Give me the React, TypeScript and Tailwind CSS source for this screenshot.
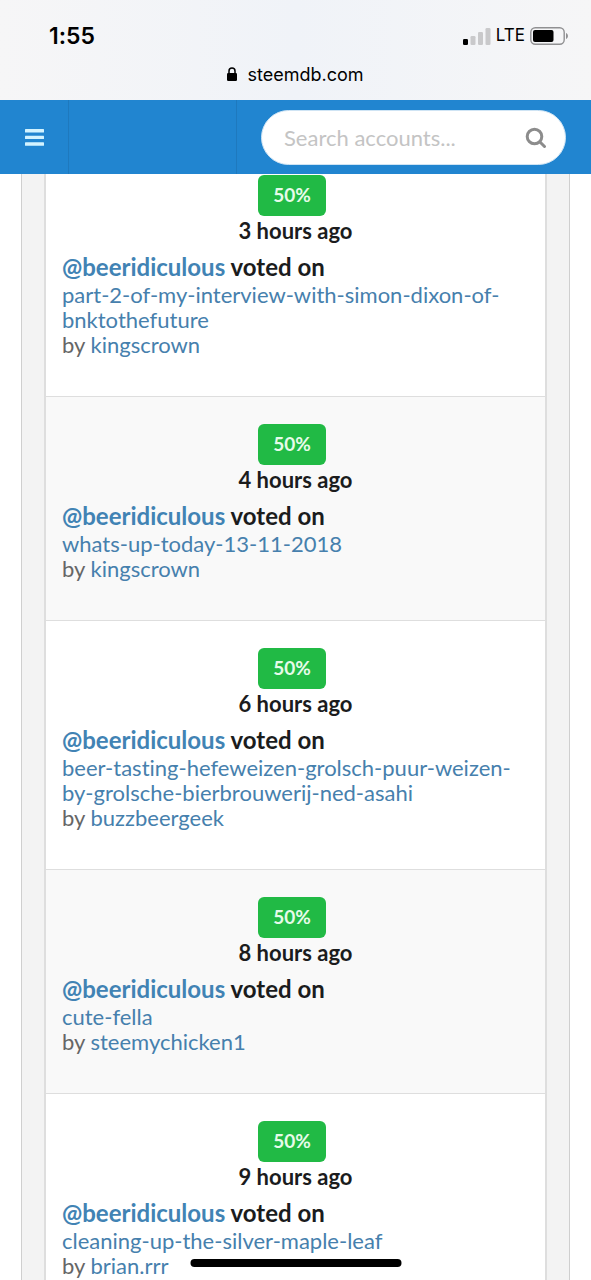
import React from 'react';

interface Vote {
  weight: string;
  time: string;
  post: string;
  author: string;
}

const voter = 'beeridiculous';

const votes: Vote[] = [
  { weight: '50%', time: '3 hours ago', post: 'part-2-of-my-interview-with-simon-dixon-of-bnktothefuture', author: 'kingscrown' },
  { weight: '50%', time: '4 hours ago', post: 'whats-up-today-13-11-2018', author: 'kingscrown' },
  { weight: '50%', time: '6 hours ago', post: 'beer-tasting-hefeweizen-grolsch-puur-weizen-by-grolsche-bierbrouwerij-ned-asahi', author: 'buzzbeergeek' },
  { weight: '50%', time: '8 hours ago', post: 'cute-fella', author: 'steemychicken1' },
  { weight: '50%', time: '9 hours ago', post: 'cleaning-up-the-silver-maple-leaf', author: 'brian.rrr' },
];

const StatusBar: React.FC = () => (
  <div className="h-[100px] shrink-0 bg-linear-to-r from-[#f6f6f7] via-[#f0f3f8] to-[#f6f6f7] pt-5 font-['Inter',sans-serif] text-black">
    <div className="flex h-8 items-center justify-between pr-[22px] pl-[49px]">
      <span className="text-[23px] font-semibold">1:55</span>
      <div className="flex items-center gap-[5px]">
        <svg width="28" height="17" viewBox="0 0 28 17" aria-hidden="true">
          <rect x="0" y="11" width="5" height="6" rx="1.2" fill="#000" />
          <rect x="7.5" y="8" width="5" height="9" rx="1.2" fill="#c9c9cb" />
          <rect x="15" y="4" width="5" height="13" rx="1.2" fill="#c9c9cb" />
          <rect x="22.5" y="0" width="5" height="17" rx="1.2" fill="#c9c9cb" />
        </svg>
        <span className="text-[17px]">LTE</span>
        <svg width="39" height="18" viewBox="0 0 39 18" aria-hidden="true">
          <rect x="0.8" y="0.8" width="33.4" height="16.4" rx="4.5" fill="none" stroke="#909092" strokeWidth="1.4" />
          <rect x="3" y="3" width="20.5" height="12" rx="2" fill="#000" />
          <path d="M36 6c2.6 1 2.6 5 0 6z" fill="#909092" />
        </svg>
      </div>
    </div>
    <div className="flex h-11 items-center justify-center gap-[10px]">
      <svg width="10" height="14" viewBox="0 0 10 14" aria-hidden="true">
        <rect x="0" y="6" width="10" height="8" rx="1.2" fill="#000" />
        <path d="M2 7V4a3 3 0 0 1 6 0v3" fill="none" stroke="#000" strokeWidth="1.5" />
      </svg>
      <span className="text-[18px]">steemdb.com</span>
    </div>
  </div>
);

const NavBar: React.FC = () => (
  <nav className="flex h-[74px] shrink-0 bg-[#2185d0]">
    <button type="button" aria-label="Menu" className="flex w-[69px] shrink-0 items-center justify-center border-r border-[#1e79be]">
      <svg width="19" height="17" viewBox="0 0 19 17" fill="#d3f3ff" aria-hidden="true">
        <rect width="19" height="3.4" rx="0.5" />
        <rect y="6.7" width="19" height="3.4" rx="0.5" />
        <rect y="13.3" width="19" height="3.4" rx="0.5" />
      </svg>
    </button>
    <div className="w-[168px] shrink-0 border-r border-[#1e79be]" />
    <div className="flex min-w-0 flex-1 items-center pr-[25px] pl-6">
      <label className="flex h-[55px] w-full items-center rounded-full border border-[#cfe4f4] bg-white pr-[18px] pl-[22px]">
        <input
          type="text"
          aria-label="Search accounts"
          placeholder="Search accounts..."
          className="min-w-0 flex-1 bg-transparent text-[22px] outline-none placeholder:text-[#c4c4c4]"
        />
        <svg width="22" height="22" viewBox="0 0 22 22" fill="none" stroke="#8c8c8c" aria-hidden="true">
          <circle cx="9.5" cy="10.5" r="7.3" strokeWidth="3" />
          <path d="M15 16l4.5 4.5" strokeWidth="3" strokeLinecap="round" />
        </svg>
      </label>
    </div>
  </nav>
);

const VoteRow: React.FC<{ vote: Vote }> = ({ vote }) => (
  <li className="border-t border-[#dedede] px-4 pt-[27px] pb-[39px] even:bg-[#f9f9f9] first:border-t-0 first:pt-px">
    <div className="flex flex-col items-center font-bold">
      <span className="mr-[7px] flex h-[41px] w-[68px] items-center justify-center rounded-[6px] bg-[#21ba45] text-[19px] text-[#e6fbe9]">
        {vote.weight}
      </span>
      <span className="text-[22px] leading-[30px]">{vote.time}</span>
    </div>
    <p className="mt-[6px] text-[24px] leading-[30px] font-bold">
      <a href="#" className="text-[#4183b4]">@{voter}</a> voted on
    </p>
    <p className="text-[22px] leading-[25px] text-[#666]">
      <a href="#" className="text-[#4680ad]">{vote.post}</a>
      <br />
      by <a href="#" className="text-[#4680ad]">{vote.author}</a>
    </p>
  </li>
);

export default function App() {
  return (
    <div className="relative flex h-screen flex-col overflow-hidden bg-white font-['Lato',sans-serif] text-[#1b1c1d] [font-variant-ligatures:none]">
      <StatusBar />
      <NavBar />
      <main className="mx-[21px] min-h-0 flex-1 overflow-hidden border-x border-[#cfcfcf] bg-[#f3f3f3] px-[22px]">
        <ul className="border-x-2 border-[#dedede] bg-white">
          {votes.map((vote) => (
            <VoteRow key={vote.time} vote={vote} />
          ))}
        </ul>
      </main>
      {/* Home indicator */}
      <div className="absolute bottom-[13px] left-1/2 h-2 w-[211px] -translate-x-1/2 rounded-full bg-black" />
    </div>
  );
}
